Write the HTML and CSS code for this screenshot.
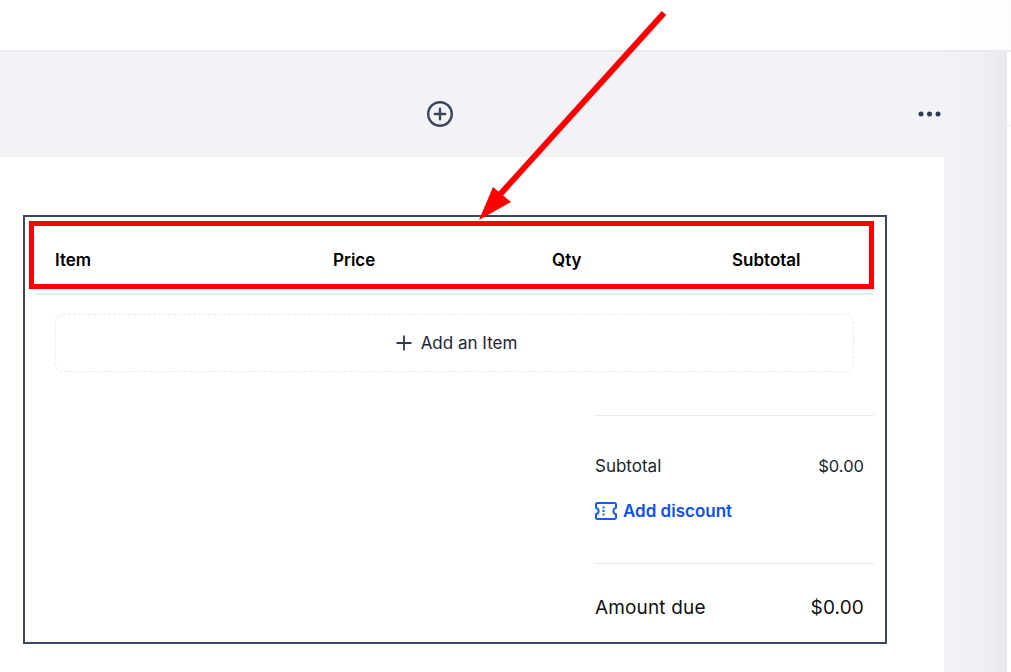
FILE: index.html
```html
<!DOCTYPE html>
<html lang="en">
<head>
<meta charset="utf-8">
<title>Invoice items</title>
<link rel="stylesheet" href="styles.css">
</head>
<body>
<header class="topbar"></header>
<div class="workspace">
  <main class="main">
    <div class="toolbar">
      <svg class="icon-add" width="28" height="28" viewBox="0 0 28 28" fill="none" stroke="#3b475c" stroke-width="2.4" stroke-linecap="round"><circle cx="14" cy="14" r="11.8"/><path d="M14 8.8v10.4M8.8 14h10.4"/></svg>
      <svg class="icon-more" width="24" height="6" viewBox="0 0 24 6" fill="#2f3b52"><circle cx="3" cy="3" r="2.5"/><circle cx="11.5" cy="3" r="2.5"/><circle cx="20" cy="3" r="2.5"/></svg>
    </div>
    <section class="card">
      <div class="frame">
        <div class="table-head">
          <span>Item</span><span>Price</span><span>Qty</span><span>Subtotal</span>
        </div>
        <div class="head-rule"></div>
        <button class="add-item">
          <svg width="18" height="18" viewBox="0 0 18 18" fill="none" stroke="#2f3b52" stroke-width="1.8"><path d="M9 1.5v15M1.5 9h15"/></svg>
          Add an Item
        </button>
        <div class="summary">
          <div class="row subtotal"><span>Subtotal</span><span class="value">$0.00</span></div>
          <a class="discount">
            <svg width="22" height="18" viewBox="0 0 22 18" fill="none" stroke="#0f5ef7" stroke-width="2" stroke-linejoin="round"><path d="M2.5 1h17a1.5 1.5 0 0 1 1.5 1.5v3.2a3.4 3.4 0 0 0 0 6.6v3.2a1.5 1.5 0 0 1-1.5 1.5h-17a1.5 1.5 0 0 1-1.5-1.5v-3.2a3.4 3.4 0 0 0 0-6.6v-3.2a1.5 1.5 0 0 1 1.5-1.5z"/><path d="M8.5 4.6v1.8M8.5 8.1v1.8M8.5 11.6v1.8"/></svg>
            Add discount
          </a>
          <div class="row due"><span>Amount due</span><span>$0.00</span></div>
        </div>
      </div>
    </section>
  </main>
  <aside class="side"></aside>
</div>
<svg class="arrow" width="1011" height="672" viewBox="0 0 1011 672" fill="#ff0000"><path d="M664 13L495 200" stroke="#ff0000" stroke-width="6" fill="none"/><path d="M479 220L493 187L511 202z"/></svg>
</body>
</html>
```
FILE: styles.css
```css
* { box-sizing: border-box; }
html, body { margin: 0; height: 672px; overflow: hidden; background: #fff; }
body { font-family: Inter, "Liberation Sans", sans-serif; color: #111; position: relative; }
.topbar { height: 52px; background: linear-gradient(90deg, #fff 0, #fff 950px, #fcfcfc 1011px); border-bottom: 2px solid #e9eaee; }
.workspace { display: flex; height: 620px; }
.main { width: 1007px; background: linear-gradient(90deg, #f2f3f7 0, #f2f3f7 940px, #eeeff3 985px, #e8e9ec 1007px); }
.toolbar { height: 105px; display: flex; align-items: center; padding: 19px 0 0 426px; gap: 464px; }
.icon-add, .icon-more { flex: none; }
.card { width: 944px; height: 515px; background: #fff; padding: 58px 0 0 23px; }
.frame { width: 864px; height: 429px; border: 2px solid #3b475c; padding: 4px 11px 0 4px; }
.table-head { height: 68px; border: 5px solid #ff0000; display: grid; grid-template-columns: 278px 219px 180px 1fr; align-items: center; padding: 9px 0 0 21px; font-weight: 600; font-size: 17px; color: #000; }
.head-rule { height: 2px; background: #ebebf0; margin: 4px 0 0 7px; }
.add-item { display: flex; align-items: center; justify-content: center; gap: 8px; width: 799px; height: 58px; margin: 19px 0 0 26px; background: #fff; border: 1px dashed #ececee; border-radius: 8px; font: 400 17px Inter, "Liberation Sans", sans-serif; color: #1d2433; padding: 0 0 0 3px; }
.summary { width: 280px; margin: 43px 0 0 565px; border-top: 1px solid #ebebee; height: 228px; }
.row { display: flex; justify-content: space-between; padding: 0 10px 0 1px; }
.subtotal { margin-top: 40px; font-size: 17px; line-height: 20px; color: #1a1f2b; }
.value { font-size: 16.5px; }
.discount { display: flex; align-items: center; gap: 6px; margin-top: 25px; padding-left: 1px; font-size: 17px; line-height: 20px; font-weight: 600; color: #0f4ff0; padding-bottom: 42px; border-bottom: 1px solid #ebebee; }
.due { margin-top: 33px; font-size: 19px; line-height: 22px; font-weight: 400; letter-spacing: 0.15px; color: #111; }
.side { flex: 1; background: #fff; height: 74px; border-bottom: 1px solid #eeeef1; }
.arrow { position: absolute; left: 0; top: 0; pointer-events: none; }
```
